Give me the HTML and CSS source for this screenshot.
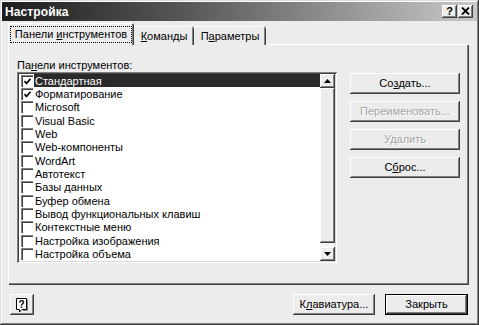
FILE: index.html
```html
<!DOCTYPE html>
<html lang="ru">
<head>
<meta charset="utf-8">
<title>Настройка</title>
<link rel="stylesheet" href="styles.css">
</head>
<body>
<div class="win">
  <div class="titlebar">
    <span class="title">Настройка</span>
    <div class="tbtns">
      <span class="tbtn help-q">?</span>
      <span class="tbtn"><svg width="9" height="8" viewBox="0 0 9 8"><path d="M1 0.5 L8 7.5 M8 0.5 L1 7.5" stroke="#000" stroke-width="1.8"/></svg></span>
    </div>
  </div>
  <div class="body">
    <div class="tabs">
      <div class="tab sel"><span class="focus">Панели <u>и</u>нструментов</span></div>
      <div class="tab t2"><span><u>К</u>оманды</span></div>
      <div class="tab t3"><span>П<u>а</u>раметры</span></div>
    </div>
    <div class="panel">
      <div class="label">Па<u>н</u>ели инструментов:</div>
      <div class="content">
        <div class="listbox">
          <div class="items">
            <div class="row selrow"><span class="cb on"><svg width="7" height="7" viewBox="0 0 7 7"><path d="M0.5 3 L2.5 5.5 L6.5 0.8" stroke="#000" stroke-width="1.7" fill="none"/></svg></span><span class="txt">Стандартная</span></div>
            <div class="row"><span class="cb on"><svg width="7" height="7" viewBox="0 0 7 7"><path d="M0.5 3 L2.5 5.5 L6.5 0.8" stroke="#000" stroke-width="1.7" fill="none"/></svg></span><span class="txt">Форматирование</span></div>
            <div class="row"><span class="cb"></span><span class="txt">Microsoft</span></div>
            <div class="row"><span class="cb"></span><span class="txt">Visual Basic</span></div>
            <div class="row"><span class="cb"></span><span class="txt">Web</span></div>
            <div class="row"><span class="cb"></span><span class="txt">Web-компоненты</span></div>
            <div class="row"><span class="cb"></span><span class="txt">WordArt</span></div>
            <div class="row"><span class="cb"></span><span class="txt">Автотекст</span></div>
            <div class="row"><span class="cb"></span><span class="txt">Базы данных</span></div>
            <div class="row"><span class="cb"></span><span class="txt">Буфер обмена</span></div>
            <div class="row"><span class="cb"></span><span class="txt">Вывод функциональных клавиш</span></div>
            <div class="row"><span class="cb"></span><span class="txt">Контекстные меню</span></div>
            <div class="row"><span class="cb"></span><span class="txt">Настройка изображения</span></div>
            <div class="row"><span class="cb"></span><span class="txt">Настройка объема</span></div>
          </div>
          <div class="scroll">
            <div class="sbtn"><svg width="7" height="4" viewBox="0 0 7 4"><path d="M0 4 L3.5 0 L7 4 Z" fill="#000"/></svg></div>
            <div class="thumb"></div>
            <div class="track"></div>
            <div class="sbtn"><svg width="7" height="4" viewBox="0 0 7 4"><path d="M0 0 L7 0 L3.5 4 Z" fill="#000"/></svg></div>
          </div>
        </div>
        <div class="actions">
          <div class="btn">Со<u>з</u>дать...</div>
          <div class="btn disabled">Переименовать...</div>
          <div class="btn disabled">Удалить</div>
          <div class="btn">С<u>б</u>рос...</div>
        </div>
      </div>
    </div>
    <div class="footer">
      <div class="btn helpbtn"><svg width="14" height="16" viewBox="0 0 14 16"><path d="M1.5 1.5 H11.5 V12.5 H7 L4.5 15 V12.5 H1.5 Z" fill="#fff" stroke="#000" stroke-width="1"/><path d="M12.5 2.5 V13.5 H8" stroke="#808080" stroke-width="1" fill="none"/><text x="6.5" y="11" text-anchor="middle" font-family="Liberation Sans, Arial, sans-serif" font-weight="bold" font-size="10" fill="#000">?</text></svg></div>
      <div class="spacer"></div>
      <div class="btn kb">К<u>л</u>авиатура...</div>
      <div class="btn def">Закрыть</div>
    </div>
  </div>
</div>
</body>
</html>
```
FILE: styles.css
```css
html, body {
  margin: 0;
  padding: 0;
  background: #ececec;
}
body {
  font-family: "Liberation Sans", Arial, sans-serif;
  font-size: 11px;
  color: #000;
}
* { box-sizing: border-box; }
u { text-decoration: underline; text-underline-offset: 1px; }

.win {
  width: 479px;
  height: 325px;
  padding: 2px;
  background: #ececec;
  box-shadow: inset -1px -1px #404040, inset 1px 1px #dcdcdc, inset -2px -2px #808080, inset 2px 2px #fff;
  display: flex;
  flex-direction: column;
}

.titlebar {
  height: 19px;
  flex: none;
  background: linear-gradient(to right, #1c1c1c 0%, #5a5a5a 40%, #c8c8c8 100%);
  display: flex;
  align-items: center;
  padding: 0 4px 0 3px;
}
.title {
  flex: 1;
  color: #fff;
  font-weight: bold;
  font-size: 12px;
  letter-spacing: 0.1px;
}
.tbtns { display: flex; gap: 1px; }
.tbtn {
  width: 15px;
  height: 13px;
  background: #ececec;
  box-shadow: inset -1px -1px #404040, inset 1px 1px #fff, inset -2px -2px #808080;
  display: flex;
  align-items: center;
  justify-content: center;
  font-weight: bold;
  font-size: 11px;
  line-height: 1;
  padding-bottom: 1px;
}

.body {
  flex: 1;
  display: flex;
  flex-direction: column;
  padding: 2px 8px 0 6px;
}

.tabs {
  display: flex;
  align-items: flex-end;
  height: 22px;
  margin-bottom: -1px;
  position: relative;
  z-index: 1;
}
.tab {
  height: 19px;
  background: #ececec;
  display: flex;
  align-items: center;
  justify-content: center;
  white-space: nowrap;
  box-shadow: inset 1px 1px #fff, inset -1px 0 #404040, inset -2px 0 #808080;
  border-radius: 2px 2px 0 0;
  padding-top: 1px;
}
.tab.sel {
  width: 126px;
  height: 22px;
  box-shadow: inset 1px 1px #fff, inset -1px 0 #404040, inset -2px 0 #808080;
  padding-top: 1px;
}
.tab.t2 { width: 60px; box-shadow: inset 0 1px #fff, inset -1px 0 #404040, inset -2px 0 #808080; }
.tab.t3 { width: 72px; box-shadow: inset 0 1px #fff, inset -1px 0 #404040, inset -2px 0 #808080; }
.focus {
  border: 1px dotted #000;
  padding: 1px 4px 1px 4px;
  line-height: 13px;
}

.panel {
  height: 241px;
  flex: none;
  background: #ececec;
  box-shadow: inset 1px 1px #fff, inset -1px -1px #404040, inset -2px -2px #808080;
  padding: 15px 8px 0 9px;
}
.label {
  height: 13px;
  line-height: 12px;
}
.content {
  display: flex;
  align-items: flex-start;
  gap: 13px;
}

.listbox {
  width: 320px;
  height: 191px;
  background: #fff;
  padding: 2px;
  display: flex;
  box-shadow: inset 1px 1px #808080, inset -1px -1px #fff, inset 2px 2px #404040, inset -2px -2px #d8d8d8;
}
.items {
  flex: 1;
  overflow: hidden;
  display: flex;
  flex-direction: column;
}
.row {
  height: 13.35px;
  flex: none;
  display: flex;
  align-items: center;
  padding-left: 2px;
}
.cb {
  width: 12px;
  height: 12px;
  flex: none;
  background: #fff;
  box-shadow: inset 1px 1px #808080, inset 2px 2px #404040;
  display: flex;
  align-items: center;
  justify-content: center;
  padding: 1px 0 0 1px;
}
.txt {
  flex: 1;
  height: 100%;
  margin-left: 1px;
  padding-left: 1px;
  display: flex;
  align-items: center;
  white-space: nowrap;
}
.selrow .txt {
  background: #2a2a2a;
  color: #fff;
}

.scroll {
  width: 15px;
  display: flex;
  flex-direction: column;
  background: #f2f2f2;
}
.sbtn {
  height: 14px;
  flex: none;
  background: #ececec;
  box-shadow: inset -1px -1px #404040, inset 1px 1px #fff, inset -2px -2px #808080;
  display: flex;
  align-items: center;
  justify-content: center;
}
.thumb {
  height: 155px;
  flex: none;
  background: #ececec;
  box-shadow: inset -1px -1px #404040, inset 1px 1px #fff, inset -2px -2px #808080;
}
.track {
  flex: 1;
  background: repeating-conic-gradient(#ececec 0 25%, #fff 0 50%) 0 0 / 2px 2px;
}

.actions {
  display: flex;
  flex-direction: column;
  gap: 7px;
  margin-top: 1px;
}
.btn {
  width: 110px;
  height: 21px;
  background: #ececec;
  box-shadow: inset -1px -1px #404040, inset 1px 1px #fff, inset -2px -2px #808080;
  display: flex;
  align-items: center;
  justify-content: center;
  white-space: nowrap;
  padding-bottom: 1px;
}
.btn.disabled {
  color: #a4a4a4;
  text-shadow: 1px 1px #fff;
}

.footer {
  display: flex;
  align-items: center;
  margin-top: 9px;
  padding-left: 2px;
  padding-right: 1px;
}
.spacer { flex: 1; }
.btn.helpbtn { width: 24px; padding: 1px 0 0 0; }
.btn.kb { width: 82px; margin-right: 10px; }
.btn.def {
  width: 83px;
  box-shadow: inset 0 0 0 1px #000, inset -2px -2px #404040, inset 2px 2px #fff, inset -3px -3px #808080;
}
```
